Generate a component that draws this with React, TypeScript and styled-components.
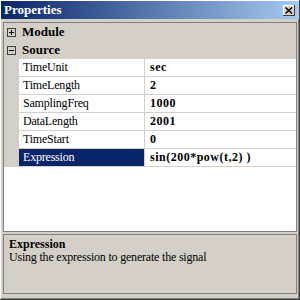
import React from "react";
import styled, { createGlobalStyle } from "styled-components";

const GlobalStyle = createGlobalStyle`
  html, body {
    margin: 0;
    padding: 0;
    background: #d4d0c8;
  }
`;

const Window = styled.div`
  box-sizing: border-box;
  width: 300px;
  height: 300px;
  padding: 1px;
  background: #d4d0c8;
  box-shadow: inset -1px -1px #404040, inset 1px 1px #ffffff,
    inset -2px -2px #808080;
  display: flex;
  flex-direction: column;
  font-family: "Liberation Serif", "Times New Roman", serif;
`;

const TitleBar = styled.div`
  height: 18px;
  flex: none;
  display: flex;
  align-items: center;
  justify-content: space-between;
  padding: 0 4px 0 3px;
  background: linear-gradient(to right, #0a246a, #a6caf0);
  color: #ffffff;
  font: bold 13px "Liberation Serif", serif;
`;

const CloseButton = styled.div`
  box-sizing: border-box;
  width: 12px;
  height: 11px;
  background: #d4d0c8;
  box-shadow: inset -1px -1px #404040, inset 1px 1px #ffffff;
  display: flex;
  align-items: center;
  justify-content: center;
`;

const Body = styled.div`
  flex: 1;
  display: flex;
  flex-direction: column;
  gap: 2px;
  padding: 3px 2px 0 2px;
`;

const Grid = styled.div`
  box-sizing: border-box;
  height: 210px;
  border: 1px solid #808080;
  background: #ffffff;
`;

const CategoryRow = styled.div`
  height: 18px;
  display: flex;
  align-items: center;
  gap: 6px;
  padding-left: 3px;
  background: #d4d0c8;
  font: bold 13px "Liberation Serif", serif;
  color: #000;
`;

const ToggleBox = styled.div<{ open?: boolean }>`
  box-sizing: border-box;
  width: 9px;
  height: 9px;
  border: 1px solid #404040;
  position: relative;
  &::before {
    content: "";
    position: absolute;
    left: 1px;
    top: 3px;
    width: 5px;
    height: 1px;
    background: #000;
  }
  &::after {
    content: "";
    display: ${(p) => (p.open ? "none" : "block")};
    position: absolute;
    left: 3px;
    top: 1px;
    width: 1px;
    height: 5px;
    background: #000;
  }
`;

const PropRow = styled.div`
  box-sizing: border-box;
  height: 18px;
  display: flex;
  font-size: 12px;
`;

const Gutter = styled.div`
  width: 15px;
  flex: none;
  background: #d4d0c8;
`;

const NameCell = styled.div<{ selected?: boolean }>`
  box-sizing: border-box;
  width: 126px;
  flex: none;
  padding-left: 4px;
  display: flex;
  align-items: center;
  letter-spacing: -0.2px;
  border-right: 1px solid #d4d0c8;
  border-bottom: 1px solid #d4d0c8;
  background: ${(p) => (p.selected ? "#0a246a" : "#ffffff")};
  color: ${(p) => (p.selected ? "#ffffff" : "#000000")};
`;

const ValueCell = styled.div`
  flex: 1;
  padding-left: 5px;
  display: flex;
  align-items: center;
  font-weight: bold;
  letter-spacing: 0.5px;
  border-bottom: 1px solid #d4d0c8;
`;

const HelpBox = styled.div`
  box-sizing: border-box;
  height: 60px;
  border: 1px solid #808080;
  padding: 3px 5px;
  font-size: 12px;
  line-height: 13px;
  color: #000;
`;

const HelpTitle = styled.div`
  font-weight: bold;
`;

const HelpText = styled.div`
  letter-spacing: -0.2px;
`;

const props = [
  { name: "TimeUnit", value: "sec" },
  { name: "TimeLength", value: "2" },
  { name: "SamplingFreq", value: "1000" },
  { name: "DataLength", value: "2001" },
  { name: "TimeStart", value: "0" },
  { name: "Expression", value: "sin(200*pow(t,2) )", selected: true },
];

export default function App() {
  return (
    <>
      <GlobalStyle />
      <Window>
        <TitleBar>
          <span>Properties</span>
          <CloseButton>
            <svg width="8" height="7" viewBox="0 0 8 7">
              <path d="M0.5 0.5L7 6.5M7 0.5L0.5 6.5" stroke="#000" strokeWidth="1.4" />
            </svg>
          </CloseButton>
        </TitleBar>
        <Body>
          <Grid>
            <CategoryRow>
              <ToggleBox />
              Module
            </CategoryRow>
            <CategoryRow>
              <ToggleBox open />
              Source
            </CategoryRow>
            {props.map((p) => (
              <PropRow key={p.name}>
                <Gutter />
                <NameCell selected={p.selected}>{p.name}</NameCell>
                <ValueCell>{p.value}</ValueCell>
              </PropRow>
            ))}
          </Grid>
          <HelpBox>
            <HelpTitle>Expression</HelpTitle>
            <HelpText>Using the expression to generate the signal</HelpText>
          </HelpBox>
        </Body>
      </Window>
    </>
  );
}
